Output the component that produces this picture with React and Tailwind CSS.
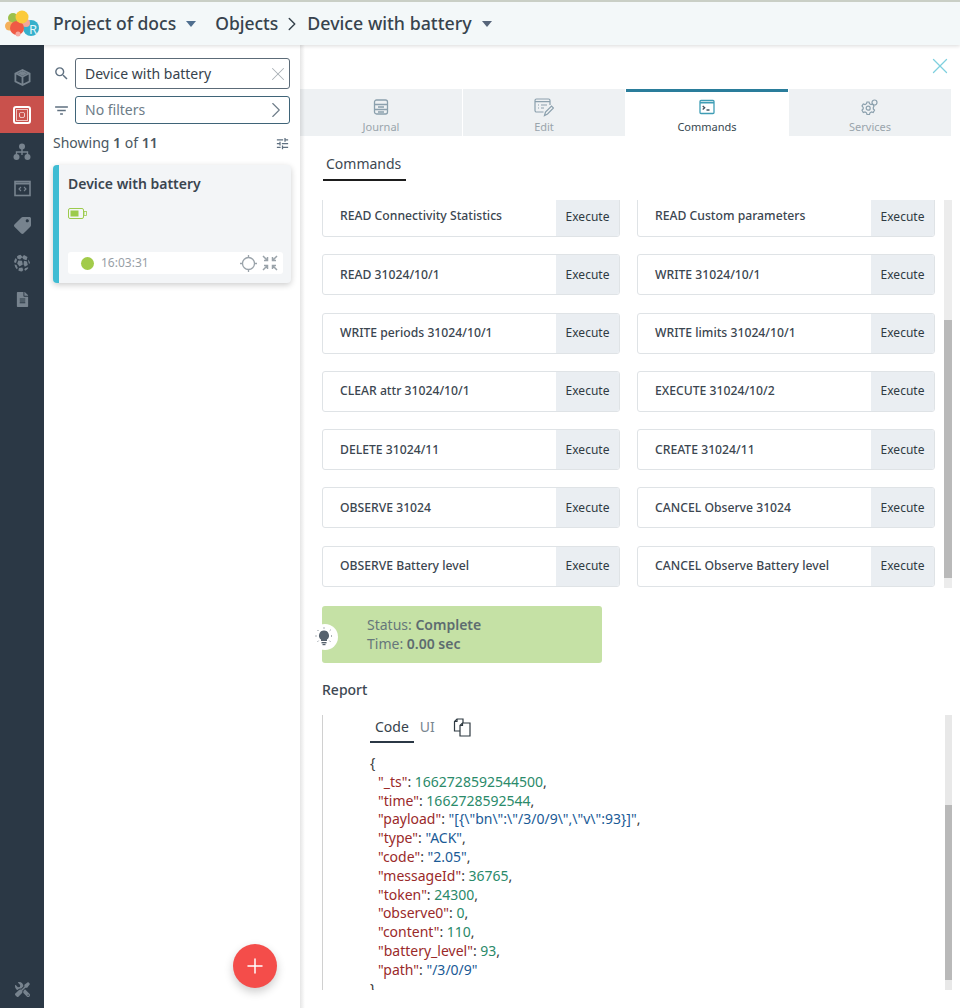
import { useState } from 'react';
import { FaTag, FaFileAlt, FaTools } from 'react-icons/fa';
import { MdSearch, MdFilterList, MdTune } from 'react-icons/md';
import { ChevronRight, X, Plus } from 'lucide-react';

const commands = [
  ['READ Connectivity Statistics', 'READ Custom parameters'],
  ['READ 31024/10/1', 'WRITE 31024/10/1'],
  ['WRITE periods 31024/10/1', 'WRITE limits 31024/10/1'],
  ['CLEAR attr 31024/10/1', 'EXECUTE 31024/10/2'],
  ['DELETE 31024/11', 'CREATE 31024/11'],
  ['OBSERVE 31024', 'CANCEL Observe 31024'],
  ['OBSERVE Battery level', 'CANCEL Observe Battery level'],
];

const report = [
  ['_ts', '1662728592544500', 'num', true],
  ['time', '1662728592544', 'num', true],
  ['payload', '"[{\\"bn\\":\\"/3/0/9\\",\\"v\\":93}]"', 'str', true],
  ['type', '"ACK"', 'str', true],
  ['code', '"2.05"', 'str', true],
  ['messageId', '36765', 'num', true],
  ['token', '24300', 'num', true],
  ['observe0', '0', 'num', true],
  ['content', '110', 'num', true],
  ['battery_level', '93', 'num', true],
  ['path', '"/3/0/9"', 'str', false],
];

function Logo() {
  return (
    <svg width="36" height="30" viewBox="0 0 36 30" className="shrink-0">
      <circle cx="26" cy="19" r="8" fill="#36b0cc" />
      <circle cx="8" cy="9" r="5" fill="#9cc04a" />
      <circle cx="4.500" cy="17" r="4.500" fill="#f5b05a" />
      <circle cx="21" cy="14" r="4" fill="#f2a79a" />
      <circle cx="12" cy="19" r="7" fill="#ef5a45" />
      <circle cx="13" cy="25" r="2.500" fill="#f7a8a0" />
      <circle cx="17" cy="8" r="6.500" fill="#fbcb3a" />
      <text x="24" y="25" fontSize="13" fill="#e3f6fa" fontFamily="Noto Sans, sans-serif">R</text>
    </svg>
  );
}

function CubeIcon() {
  return (
    <svg width="19" height="19" viewBox="0 0 19 19" fill="#77838e">
      <path d="M9.500 1 17.500 5v9l-8 4-8-4V5zM3.300 6.600v6.300l5.300 2.700V9.300zm12.400 0-5.300 2.700v6.300l5.300-2.700zM9.500 3 4.600 5.300l4.900 2.400 4.900-2.400z" fillRule="evenodd" />
      <path d="M4.600 5.300 9.500 3l4.900 2.300-4.900 2.400z" />
    </svg>
  );
}

function RecordIcon() {
  return (
    <svg width="18" height="18" viewBox="0 0 18 18" fill="none">
      <rect x="1" y="1" width="16" height="16" rx="2" stroke="#fff" strokeWidth="2" />
      <rect x="3.500" y="3.500" width="11" height="11" stroke="#f0c5c2" strokeWidth="1" />
      <circle cx="9" cy="9" r="3" fill="#fff" />
      <circle cx="9" cy="9" r="2.400" fill="#c9514c" />
    </svg>
  );
}

function TreeIcon() {
  return (
    <svg width="18" height="18" viewBox="0 0 18 18" fill="#77838e">
      <circle cx="9" cy="3.500" r="3" />
      <circle cx="3.500" cy="14" r="3" />
      <circle cx="14.500" cy="14" r="3" />
      <path d="M8.300 5h1.400v3.300h5.500V12h-1.400V9.700H9.700V12H8.300V9.700H4.200V12H2.800V8.300h5.500z" />
    </svg>
  );
}

function CodeBoxIcon() {
  return (
    <svg width="17" height="17" viewBox="0 0 17 17" fill="none" stroke="#77838e">
      <rect x="1" y="1.500" width="15" height="14" strokeWidth="1.600" />
      <path d="M1 3.500h15" strokeWidth="2" />
      <path d="M7 7l-2 2 2 2M10 7l2 2-2 2" strokeWidth="1.100" />
    </svg>
  );
}

function GlobeIcon() {
  return (
    <svg width="18" height="18" viewBox="0 0 18 18" fill="#77838e">
      <path d="M7.500.8 9.500 3 7 5.500 4.300 4.500 4 2.300A8 8 0 0 1 7.500.8z" />
      <path d="M11 1l3.500 2-1 3.200-3-1L9 3.300z" />
      <path d="M2.700 4 4 5.800 3 9 1 8.300A8 8 0 0 1 2.700 4z" />
      <path d="M5.300 6.500 9 6.800l.8 3.700-3.300 2-2.300-3z" />
      <path d="M11 6.800l3 .7.800 3.500-3 1.800-1.300-2.500z" />
      <path d="M15.300 5.500A8 8 0 0 1 17 9l-1 1-.8-3z" />
      <path d="M1.500 10.500l2 .5 1.300 3-1 1.300a8 8 0 0 1-2.300-4.800z" />
      <path d="M6 14l3.300-.5 1 2.500-1.300 1.500a8 8 0 0 1-3.700-1z" />
      <path d="M12 14.300l3-1 .3.700a8 8 0 0 1-3 2.800l-1-1z" />
    </svg>
  );
}

function BulbIcon() {
  return (
    <svg width="18" height="19" viewBox="0 0 18 19" fill="#55616d">
      <path d="M9 3.500a5 5 0 0 1 3 9v1.500H6v-1.500a5 5 0 0 1 3-9z" />
      <rect x="6.500" y="15" width="5" height="1.400" />
      <rect x="7.500" y="17" width="3" height="1.200" />
      <path d="M9 .5v1.500M2.500 3l1.200 1.200M15.500 3l-1.200 1.200M.5 9H2M16 9h1.500M2.800 14.500l1-1M15.200 14.500l-1-1" stroke="#55616d" strokeWidth="1" strokeDasharray="1 1" fill="none" />
    </svg>
  );
}

function CopyDocsIcon() {
  return (
    <svg width="18" height="19" viewBox="0 0 18 19" fill="none" stroke="#2f3a42" strokeWidth="1.200">
      <path d="M7 13H1.500V3.500L4 1h6v4" />
      <path d="M4 1v2.500H1.500" />
      <path d="M7 7.500 9.500 5h7.500v13H7z" />
      <path d="M9.500 5v2.500H7" />
    </svg>
  );
}

function SideItem({ children, active }) {
  return (
    <div className={`flex h-[37px] w-full items-center justify-center ${active ? 'bg-[#c9514c]' : ''}`}>
      {children}
    </div>
  );
}

function JournalIcon() {
  return (
    <svg width="16" height="16" viewBox="0 0 16 16" fill="none" stroke="#8ba0ad" strokeWidth="1.300">
      <rect x="1.500" y="1" width="13" height="14" rx="2" />
      <path d="M1.500 5.500h13M1.500 10.500h13M5 3.300h0M5 8h6M5 13h6" />
    </svg>
  );
}

function EditIcon() {
  return (
    <svg width="20" height="19" viewBox="0 0 20 19" fill="none" stroke="#8ba0ad" strokeWidth="1.200">
      <path d="M9.500 14H2.500A1.500 1.500 0 0 1 1 12.500V2.500A1.500 1.500 0 0 1 2.500 1h12A1.500 1.500 0 0 1 16 2.500V7" />
      <path d="M1 3.700h15M4 7h1M7 7h6M4 10h1M7 10h3" />
      <path d="M10.500 17.500l1-3.500 6-6 2 2-6 6z" />
    </svg>
  );
}

function TerminalIcon() {
  return (
    <svg width="16" height="16" viewBox="0 0 16 16" fill="none" stroke="#3f9db5" strokeWidth="1.300">
      <rect x="1" y="1.500" width="14" height="13" rx="1" />
      <path d="M1 3.700h14" strokeWidth="1.600" />
      <path d="M3.700 7l2 1.700-2 1.800M7.500 11h3" stroke="#41525f" />
    </svg>
  );
}

function ServicesIcon() {
  return (
    <svg width="18" height="19" viewBox="0 0 18 19" fill="none" stroke="#8ba0ad" strokeWidth="1.200">
      <path d="M8 4l.5 1.700 1.500.8 1.700-.5 1.300 2L12.300 9.500v1.500l1.200 1.200-1.300 2.300-1.700-.5-1.500.8L8.500 16.500H6l-.5-1.700-1.500-.8-1.700.5L1 12.200 2.200 11V9.500L1 8l1.300-2L4 6.500l1.500-.8L6 4z" />
      <circle cx="7.200" cy="10.200" r="2" />
      <circle cx="13.500" cy="4.500" r="2.500" />
    </svg>
  );
}

function Tab({ label, icon, active }) {
  return (
    <div
      className={`flex h-[47px] w-[162px] flex-col items-center border-t-[3px] pt-[6px] ${
        active ? 'border-[#2a7d9b] bg-white text-[#37474f]' : 'border-[#eef1f3] bg-[#eef1f3] text-[#9aa5ac]'
      }`}
    >
      <div className="flex h-[18px] items-center">{icon}</div>
      <span className="mt-[3px] text-[11px] leading-[16px]">{label}</span>
    </div>
  );
}

function CommandRow({ label }) {
  return (
    <div className="flex h-[41px] w-[298px] overflow-hidden rounded-[3px] border border-[#dfe3e6] bg-white">
      <div className="flex flex-1 items-center pl-[17px] text-[12.2px] font-medium text-[#3b4650]">{label}</div>
      <div className="flex w-[63px] items-center justify-center bg-[#eaeef2] text-[12px] text-[#2f3a42]">
        Execute
      </div>
    </div>
  );
}

function CollapseIcon() {
  return (
    <svg width="16" height="16" viewBox="0 0 16 16" fill="none" stroke="#9aa3aa" strokeWidth="1.500">
      <path d="M1 1l4.500 4.500M5.500 2v3.500H2M15 1l-4.500 4.500M10.500 2v3.500H14M1 15l4.500-4.500M5.500 14v-3.500H2M15 15l-4.500-4.500M10.500 14v-3.500H14" />
    </svg>
  );
}

function TargetIcon() {
  return (
    <svg width="17" height="17" viewBox="0 0 17 17" fill="none" stroke="#9aa3aa" strokeWidth="1.300">
      <circle cx="8.500" cy="8.500" r="6" />
      <path d="M8.500 0v2.500M8.500 14.500V17M0 8.500h2.500M14.500 8.500H17" />
    </svg>
  );
}

export default function App() {
  const [query, setQuery] = useState('Device with battery');

  return (
    <div className="flex h-[1008px] w-[960px] flex-col overflow-hidden bg-white font-['Noto_Sans','Open_Sans',sans-serif] text-[#37434d]">
      <header className="relative z-20 flex h-[45px] shrink-0 items-center border-t-2 border-[#c9cfc6] bg-[#f3f8f9] pl-[5px] shadow-[0_1px_4px_rgba(0,0,0,0.15)]">
        <Logo />
        <span className="ml-[12px] text-[17.5px] font-medium leading-none">Project of docs</span>
        <span className="ml-[10px] h-0 w-0 border-x-[5px] border-t-[6px] border-x-transparent border-t-[#4f6f8f]" />
        <span className="ml-[19px] text-[17.5px] font-medium leading-none">Objects</span>
        <ChevronRight size={22} strokeWidth={1.600} className="ml-[3px] -mr-[2px] text-[#37434d]" />
        <span className="ml-[6px] text-[17.8px] font-medium leading-none">Device with battery</span>
        <span className="ml-[10px] h-0 w-0 border-x-[5px] border-t-[6px] border-x-transparent border-t-[#56657a]" />
      </header>

      <div className="flex min-h-0 flex-1">
        <nav className="flex w-[44px] shrink-0 flex-col items-center justify-between bg-[#2b3845] pb-[11px] pt-[14px]">
          <div className="flex w-full flex-col">
            <SideItem><CubeIcon /></SideItem>
            <SideItem active><RecordIcon /></SideItem>
            <SideItem><TreeIcon /></SideItem>
            <SideItem><CodeBoxIcon /></SideItem>
            <SideItem><FaTag size={17} className="-scale-x-100 text-[#77838e]" /></SideItem>
            <SideItem><GlobeIcon /></SideItem>
            <SideItem><FaFileAlt size={15} className="text-[#77838e]" /></SideItem>
          </div>
          <FaTools size={15} className="-scale-x-100 text-[#77838e]" />
        </nav>

        <aside className="relative flex w-[256px] shrink-0 flex-col pl-[9px] pr-[10px] pt-[13px]">
          <div className="flex items-center">
            <MdSearch size={17} className="mr-[5px] text-[#5f7080]" />
            <div className="flex h-[31px] flex-1 items-center rounded-[3px] border border-[#5c6b78] pl-[9px]">
              <input
                className="w-full min-w-0 bg-transparent text-[14px] text-[#37434d] outline-none"
                value={query}
                onChange={(e) => setQuery(e.target.value)}
              />
              <X size={22} strokeWidth={1.100} className="shrink-0 text-[#a9b0b6]" />
            </div>
          </div>
          <div className="mt-[7px] flex items-center">
            <MdFilterList size={17} className="mr-[5px] text-[#5f7080]" />
            <div className="flex h-[28px] flex-1 items-center justify-between rounded-[3px] border border-[#3f6478] pl-[9px] text-[14px] text-[#6d7c88]">
              <span className="pb-[1px]">No filters</span>
              <ChevronRight size={26} strokeWidth={1} className="text-[#6d7c88]" />
            </div>
          </div>
          <div className="mt-[9px] flex items-center justify-between">
            <span className="text-[14px] leading-[20px] text-[#4a5761]">
              Showing <b className="font-semibold">1</b> of <b className="font-semibold">11</b>
            </span>
            <MdTune size={15} className="text-[#5f7080]" />
          </div>

          <div className="mt-[12px] flex h-[118px] w-[238px] overflow-hidden rounded-[4px] bg-[#f3f5f7] shadow-[0_2px_6px_rgba(0,0,0,0.2)]">
            <div className="w-[6px] shrink-0 bg-[#3fbcd3]" />
            <div className="flex min-w-0 flex-1 flex-col pl-[9px] pr-[8px] pt-[9px]">
              <div className="text-[14px] font-semibold leading-[20px] text-[#3a4550]">Device with battery</div>
              <svg width="19" height="11" viewBox="0 0 19 11" fill="none" className="mt-[14px]">
                <rect x="0.500" y="0.500" width="15" height="10" rx="1.500" stroke="#9ccb4d" />
                <rect x="2.500" y="2.500" width="8" height="6" fill="#9ccb4d" />
                <rect x="16" y="3.500" width="2.500" height="4" stroke="#9ccb4d" strokeWidth="0.800" />
              </svg>
              <div className="mt-auto mb-[9px] flex h-[22px] items-center rounded-[3px] bg-white pl-[13px] pr-[5px]">
                <span className="h-[13px] w-[13px] rounded-full bg-[#a2cb4a]" />
                <span className="ml-[7px] text-[12px] text-[#98a0a6]">16:03:31</span>
                <span className="ml-auto"><TargetIcon /></span>
                <span className="ml-[5px]"><CollapseIcon /></span>
              </div>
            </div>
          </div>

          <button
            type="button"
            className="absolute bottom-[20px] left-[189px] flex h-[44px] w-[44px] items-center justify-center rounded-full bg-[#f44d4a] text-white shadow-[0_4px_10px_rgba(0,0,0,0.2)]"
          >
            <Plus size={24} strokeWidth={1.500} />
          </button>
        </aside>

        <main className="relative flex min-w-0 flex-1 flex-col">
          <div className="absolute inset-y-0 left-0 z-10 w-[5px] bg-gradient-to-r from-black/10 to-transparent" />
          <div className="flex h-[44px] shrink-0 items-start justify-end pr-[7px] pt-[8px]">
            <X size={26} strokeWidth={1.200} className="text-[#7fd0de]" />
          </div>
          <div className="flex w-[651px] shrink-0 gap-px">
            <Tab label="Journal" icon={<JournalIcon />} />
            <Tab label="Edit" icon={<EditIcon />} />
            <Tab label="Commands" icon={<TerminalIcon />} active />
            <Tab label="Services" icon={<ServicesIcon />} />
          </div>

          <div className="mt-[18px] ml-[23px] w-[83px] shrink-0 border-b-2 border-[#1d1d1d] pb-[5px] pl-[3px] text-[14px] leading-[20px] text-[#3d4852]">
            Commands
          </div>

          <div className="mt-[19px] flex h-[388px] w-[652px] shrink-0 overflow-hidden pl-[22px]">
            <div className="-mt-[4px] flex w-[613px] shrink-0 flex-col gap-[17.300px]">
              {commands.map(([left, right]) => (
                <div key={left} className="flex justify-between">
                  <CommandRow label={left} />
                  <CommandRow label={right} />
                </div>
              ))}
            </div>
            <div className="ml-[9px] flex h-full w-[8px] shrink-0 flex-col bg-[#ececec]">
              <div className="mt-[120px] h-[258px] bg-[#b9b9b9]" />
            </div>
          </div>

          <div className="ml-[22px] mt-[18px] flex h-[57px] w-[280px] shrink-0 items-center rounded-[3px] bg-[#c5e1a5] pb-[2px] pl-[45px] text-[14px] leading-[19px] text-[#66777b]">
            <div className="relative">
              <div className="absolute left-[-55px] top-[9px] flex h-[26px] w-[26px] items-center justify-center rounded-full bg-white">
                <span className="-ml-[2px]"><BulbIcon /></span>
              </div>
              <div>Status: <b className="font-semibold text-[#5d6c70]">Complete</b></div>
              <div>Time: <b className="font-semibold text-[#5d6c70]">0.00 sec</b></div>
            </div>
          </div>

          <div className="ml-[22px] mt-[17px] shrink-0 text-[14px] font-medium leading-[20px] text-[#3d4852]">Report</div>

          <div className="ml-[22px] mt-[15px] flex min-h-0 w-[630px] flex-1">
            <div className="h-[275px] flex-1 overflow-hidden border-l border-[#d0d0d0] pl-[47px] pt-[2px]">
              <div className="flex items-center">
                <div className="border-b-2 border-[#2b3845] px-[5px] pb-[4px] text-[14px] leading-[20px] text-[#37434d]">Code</div>
                <div className="ml-[6px] pb-[6px] text-[14px] leading-[20px] text-[#78858f]">UI</div>
                <span className="ml-[18px] mb-[6px]"><CopyDocsIcon /></span>
              </div>
              <pre className="mt-[11px] font-['Noto_Sans','Open_Sans',sans-serif] text-[14px] leading-[18.800px] text-[#3a3a3a]">
                <div>{'{'}</div>
                {report.map(([key, value, kind, comma]) => (
                  <div key={key} className="pl-[8px]">
                    <span className="text-[#9a2a2a]">"{key}"</span>:{' '}
                    <span className={kind === 'num' ? 'text-[#2a8a6a]' : 'text-[#1a5a96]'}>{value}</span>
                    {comma ? ',' : ''}
                  </div>
                ))}
                <div>{'}'}</div>
              </pre>
            </div>
            <div className="ml-[8px] flex h-[275px] w-[7px] flex-col bg-[#e8e8e8]">
              <div className="mt-[90px] h-[175px] bg-[#b9b9b9]" />
            </div>
          </div>
        </main>
      </div>
    </div>
  );
}
